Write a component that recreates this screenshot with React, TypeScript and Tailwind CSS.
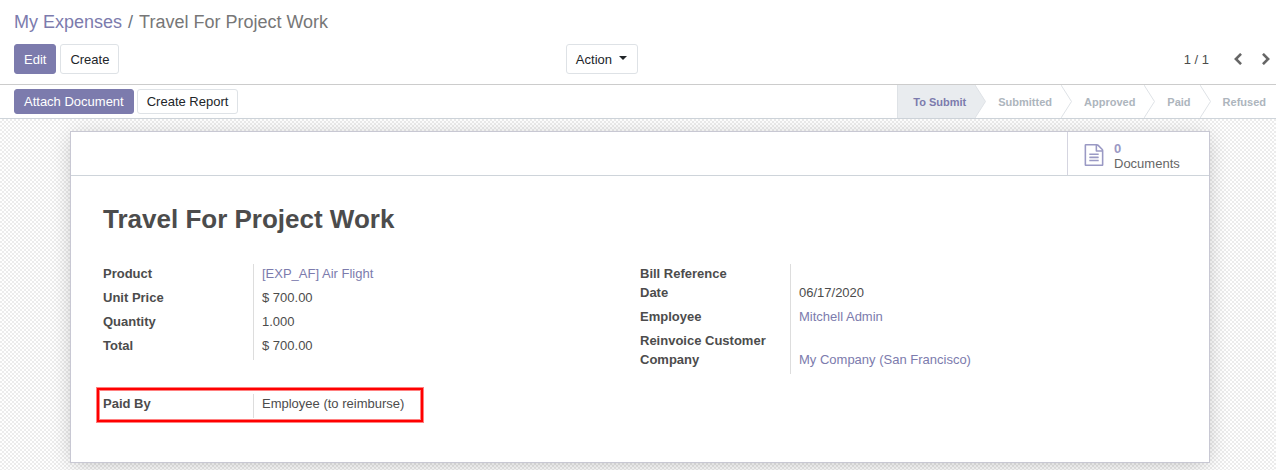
import React from "react";
import clsx from "clsx";

// --- Types ---
interface Field {
  label: string;
  value?: string;
  link?: boolean;
}

// --- Data ---
const stages = ["To Submit", "Submitted", "Approved", "Paid", "Refused"];
const currentStage = "To Submit";

const expenseFields: Field[] = [
  { label: "Product", value: "[EXP_AF] Air Flight", link: true },
  { label: "Unit Price", value: "$ 700.00" },
  { label: "Quantity", value: "1.000" },
  { label: "Total", value: "$ 700.00" },
];

const detailFields: Field[] = [
  { label: "Bill Reference" },
  { label: "Date", value: "06/17/2020" },
  { label: "Employee", value: "Mitchell Admin", link: true },
  { label: "Reinvoice Customer" },
  { label: "Company", value: "My Company (San Francisco)", link: true },
];

const paymentFields: Field[] = [
  { label: "Paid By", value: "Employee (to reimburse)" },
];

// --- Icons ---
const ChevronLeft = () => (
  <svg viewBox="410 26 1036 1612" className="h-3 w-2 fill-current" aria-hidden="true">
    <path d="M1427 301l-531 531 531 531q19 19 19 45t-19 45l-166 166q-19 19-45 19t-45-19L429 877q-19-19-19-45t19-45l742-742q19-19 45-19t45 19l166 166q19 19 19 45t-19 45z" />
  </svg>
);

const ChevronRight = () => (
  <svg viewBox="346 26 1036 1612" className="h-3 w-2 fill-current" aria-hidden="true">
    <path d="M1363 877l-742 742q-19 19-45 19t-45-19l-166-166q-19-19-19-45t19-45l531-531-531-531q-19-19-19-45t19-45l166-166q19-19 45-19t45 19l742 742q19 19 19 45t-19 45z" />
  </svg>
);

const FileIcon = () => (
  <svg viewBox="0 0 1536 1792" className="h-[22px] w-5 fill-current" aria-hidden="true">
    <path d="M1468 380q28 28 48 76t20 88v1152q0 40-28 68t-68 28H96q-40 0-68-28t-28-68V96q0-40 28-68T96 0h896q40 0 88 20t76 48zm-444-244v376h376q-10-29-22-41l-313-313q-12-12-41-22zm384 1528V640H992q-40 0-68-28t-28-68V128H128v1536h1280zM384 800q0-14 9-23t23-9h704q14 0 23 9t9 23v64q0 14-9 23t-23 9H416q-14 0-23-9t-9-23v-64zm736 224q14 0 23 9t9 23v64q0 14-9 23t-23 9H416q-14 0-23-9t-9-23v-64q0-14 9-23t23-9h704zm0 256q14 0 23 9t9 23v64q0 14-9 23t-23 9H416q-14 0-23-9t-9-23v-64q0-14 9-23t23-9h704z" />
  </svg>
);

// --- Components ---
const Button = ({
  primary,
  small,
  children,
}: {
  primary?: boolean;
  small?: boolean;
  children: React.ReactNode;
}) => (
  <button
    type="button"
    className={clsx(
      "flex items-center rounded-[3px] border px-[9px] whitespace-nowrap",
      small ? "h-[25px]" : "h-[30px] pt-px",
      primary
        ? "border-[#7c7bad] bg-[#7c7bad] text-white"
        : "border-[#dee2e6] bg-white text-[#212529]"
    )}
  >
    {children}
  </button>
);

const StatusStep = ({ stage, index }: { stage: string; index: number }) => {
  const active = stage === currentStage;
  const last = index === stages.length - 1;
  return (
    <li
      aria-current={active ? "step" : undefined}
      className={clsx(
        "relative flex items-center pt-px text-[11px] font-bold",
        index === 0 ? "border-l border-[#dee2e6] pl-[15px]" : "pl-[23px]",
        last ? "pr-[10px]" : "pr-[9px]",
        active ? "bg-[#e9ecef] text-[#7c7bad]" : "text-[#adb5bd]"
      )}
    >
      {stage}
      {!last && (
        <svg
          viewBox="0 0 11 33"
          preserveAspectRatio="none"
          className="absolute top-0 left-full h-full w-[11px]"
          aria-hidden="true"
        >
          <path
            d="M0 0L10.5 16.5L0 33"
            fill={active ? "#e9ecef" : "none"}
            stroke="#dee2e6"
            strokeWidth="1"
          />
        </svg>
      )}
    </li>
  );
};

const FieldTable = ({ fields }: { fields: Field[] }) => (
  <table className="w-full table-fixed border-separate border-spacing-0 text-left">
    <tbody>
      {fields.map((field) => (
        <tr key={field.label} className={field.value ? "h-6" : "h-[19px]"}>
          <th scope="row" className="w-[150px] p-0 align-top leading-[19px] font-bold">
            {field.label}
          </th>
          <td className="border-l border-[#dddddd] p-0 pl-2 align-top leading-[19px]">
            {field.link ? (
              <a href="#" className="text-[#7c7bad]">
                {field.value}
              </a>
            ) : (
              field.value
            )}
          </td>
        </tr>
      ))}
    </tbody>
  </table>
);

export default function App() {
  return (
    <div className="flex min-h-screen flex-col bg-white font-['Liberation_Sans',Arial,sans-serif] text-[13px] text-[#4c4c4c]">
      {/* Control panel */}
      <header className="border-b border-[#cccccc] pt-2 pb-[10px]">
        <nav aria-label="Breadcrumb" className="px-[14px] text-lg leading-7">
          <ol className="flex">
            <li>
              <a href="#" className="text-[#7c7bad]">
                My Expenses
              </a>
            </li>
            <li className="text-[#777777]">
              <span className="px-[6px] text-[#6c757d]">/</span>
              Travel For Project Work
            </li>
          </ol>
        </nav>
        <div className="mt-2 flex items-center">
          <div className="flex w-1/2 items-center justify-between pl-[14px]">
            <div className="flex gap-1">
              <Button primary>Edit</Button>
              <Button>Create</Button>
            </div>
            <Button>
              Action
              <span className="mr-px mb-1 ml-[7px] border-x-4 border-t-4 border-x-transparent border-t-current" />
            </Button>
          </div>
          <div className="flex w-1/2 items-center justify-end pr-[6px]">
            <span className="mr-[25px] pt-px">1 / 1</span>
            <div className="flex gap-5 text-[#666666]">
              <button type="button" aria-label="Previous">
                <ChevronLeft />
              </button>
              <button type="button" aria-label="Next">
                <ChevronRight />
              </button>
            </div>
          </div>
        </div>
      </header>

      {/* Status bar */}
      <div className="flex h-[34px] justify-between border-b border-[#ced4da] pl-[14px]">
        <div className="flex items-center gap-[3px]">
          <Button primary small>
            Attach Document
          </Button>
          <Button small>Create Report</Button>
        </div>
        <ol className="flex">
          {stages.map((stage, index) => (
            <StatusStep key={stage} stage={stage} index={index} />
          ))}
        </ol>
      </div>

      {/* Form sheet */}
      <main className="flex-1 bg-[conic-gradient(#ececec_25%,#ffffff_0_50%,#ececec_0_75%,#ffffff_0)] bg-size-[4px_4px] pt-3 pr-4 pb-[7px] pl-5">
        <div className="mx-auto max-w-[1140px] border border-[#c8c8d3] bg-white shadow-[0_3px_20px_-3px_rgba(0,0,0,0.24)]">
          <div className="flex h-11 justify-end border-b border-[#ced4da]">
            <button
              type="button"
              className="flex w-[142px] items-center gap-[10px] border-l border-[#d5d5e0] pt-[3px] pl-4 text-left text-[#9a99c4]"
            >
              <FileIcon />
              <span className="flex flex-col pt-[2px] leading-[15px]">
                <span className="font-bold">0</span>
                <span className="text-[#666666]">Documents</span>
              </span>
            </button>
          </div>

          <div className="px-8 pt-6 pb-11">
            <h1 className="text-[26px] leading-[38px] font-bold">Travel For Project Work</h1>
            <div className="mt-[26px] grid grid-cols-2 items-start">
              <FieldTable fields={expenseFields} />
              <FieldTable fields={detailFields} />
            </div>
            <div className="mt-5 grid grid-cols-2">
              <div className="relative">
                <FieldTable fields={paymentFields} />
                {/* Highlight frame */}
                <div className="pointer-events-none absolute -top-[6px] -left-[6px] h-[34px] w-[326px] border-2 border-[#ff0000] ring-1 ring-[#ff8080] inset-ring-1 inset-ring-[#ff8080]" />
              </div>
            </div>
          </div>
        </div>
      </main>
    </div>
  );
}
